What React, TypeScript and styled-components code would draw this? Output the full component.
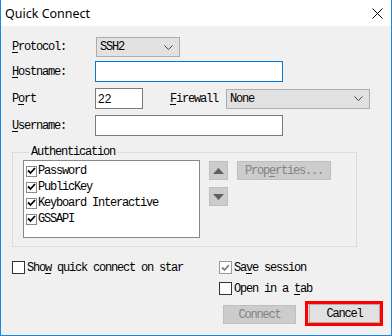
import React from 'react';
import styled, { createGlobalStyle } from 'styled-components';

const GlobalStyle = createGlobalStyle`
  html, body {
    margin: 0;
    padding: 0;
    background: #ffffff;
  }
`;

const mono = `"Liberation Mono", "DejaVu Sans Mono", monospace`;

const Window = styled.div`
  width: 392px;
  height: 336px;
  box-sizing: border-box;
  border: 1px solid #1a86dd;
  border-top: none;
  display: flex;
  flex-direction: column;
  background: #f0f0f0;
  font-family: ${mono};
  font-size: 12px;
  letter-spacing: -1.2px;
  color: #000;
  overflow: hidden;
`;

const TitleBar = styled.div`
  height: 26px;
  background: #fff;
  display: flex;
  align-items: center;
  justify-content: space-between;
  padding: 0 8px 0 4px;
  font-family: "Noto Sans", "Liberation Sans", sans-serif;
  font-size: 12.5px;
  letter-spacing: 0;
`;

const Body = styled.div`
  flex: 1;
  padding: 11px 0 0 11px;
  display: flex;
  flex-direction: column;
`;

const FormRow = styled.div<{ $h: number; $mt?: number }>`
  display: flex;
  align-items: center;
  height: ${(p) => p.$h}px;
  margin-top: ${(p) => p.$mt ?? 0}px;
`;

const Label = styled.span<{ $w?: number }>`
  width: ${(p) => p.$w ?? 84}px;
  flex-shrink: 0;
  white-space: pre;
`;

const U = styled.span`
  text-decoration: underline;
  text-underline-offset: 2px;
`;

const Select = styled.div<{ $w: number }>`
  width: ${(p) => p.$w}px;
  height: 20px;
  box-sizing: border-box;
  background: #e1e1e1;
  border: 1px solid #adadad;
  display: flex;
  align-items: center;
  justify-content: space-between;
  padding: 0 6px 0 3px;
`;

const Input = styled.div<{ $w: number; $focus?: boolean }>`
  width: ${(p) => p.$w}px;
  height: 21px;
  margin-left: -1px;
  box-sizing: border-box;
  background: #fff;
  border: 1px solid ${(p) => (p.$focus ? '#0078d7' : '#7a7a7a')};
  display: flex;
  align-items: center;
  padding-left: 2px;
  font-family: "Liberation Sans", Arial, sans-serif;
  font-size: 12px;
  letter-spacing: 0;
`;

const Group = styled.fieldset`
  margin: 10px 0 0 0;
  width: 345px;
  height: 101px;
  box-sizing: border-box;
  border: 1px solid #dcdcdc;
  padding: 2px 0 0 10px;
  display: flex;
  gap: 9px;
  align-items: flex-start;
  legend {
    padding: 0 2px;
    margin-left: 6px;
    line-height: 12px;
  }
`;

const ListBox = styled.div`
  width: 177px;
  height: 78px;
  box-sizing: border-box;
  background: #fff;
  border: 1px solid #828790;
  padding: 2px 0 0 2px;
  display: flex;
  flex-direction: column;
`;

const ListItem = styled.div`
  height: 16px;
  display: flex;
  align-items: center;
  gap: 1px;
`;

const SmallBox = styled.span`
  width: 11px;
  height: 11px;
  box-sizing: border-box;
  border: 1px solid #8a8a8a;
  background: #fff;
  display: inline-flex;
  align-items: center;
  justify-content: center;
`;

const SideCol = styled.div`
  display: flex;
  flex-direction: column;
  gap: 7px;
  padding-top: 1px;
`;

const Arrow = styled.div`
  width: 19px;
  height: 19px;
  box-sizing: border-box;
  background: #cccccc;
  border: 1px solid #bfbfbf;
  display: flex;
  align-items: center;
  justify-content: center;
`;

const Button = styled.div<{ $w: number; $disabled?: boolean }>`
  width: ${(p) => p.$w}px;
  height: 19px;
  box-sizing: border-box;
  background: ${(p) => (p.$disabled ? '#cccccc' : '#e1e1e1')};
  border: 1px solid ${(p) => (p.$disabled ? '#bfbfbf' : '#adadad')};
  color: ${(p) => (p.$disabled ? '#838383' : '#000')};
  display: flex;
  align-items: center;
  justify-content: center;
`;

const Highlight = styled.div`
  border: 3px solid #ff0000;
  padding: 0 0 0 1px;
  position: relative;
  top: -1px;
  box-shadow: 0 0 2px rgba(0, 0, 0, 0.3) inset;
`;

const Options = styled.div`
  display: flex;
  margin-top: 14px;
`;

const OptCol = styled.div<{ $w?: number }>`
  width: ${(p) => p.$w ?? 'auto'}px;
  display: flex;
  flex-direction: column;
  gap: 8px;
`;

const Check = styled.div`
  display: flex;
  align-items: center;
  gap: 2px;
  height: 13px;
`;

const Box = styled.span<{ $disabled?: boolean }>`
  width: 13px;
  height: 13px;
  box-sizing: border-box;
  border: 1px solid ${(p) => (p.$disabled ? '#9a9a9a' : '#333')};
  background: #fff;
  display: inline-flex;
  align-items: center;
  justify-content: center;
`;

const Footer = styled.div`
  display: flex;
  justify-content: flex-end;
  align-items: center;
  gap: 9px;
  margin-top: 7px;
  padding-right: 8px;
`;

const Chevron = () => (
  <svg width="9" height="5" viewBox="0 0 9 5">
    <path d="M0.5 0.5 L4.5 4.5 L8.5 0.5" fill="none" stroke="#444" strokeWidth="1" />
  </svg>
);

const Tick = ({ color = '#000' }: { color?: string }) => (
  <svg width="9" height="8" viewBox="0 0 9 8">
    <path d="M1 3.5 L3.5 6 L8 1" fill="none" stroke={color} strokeWidth="1.8" />
  </svg>
);

const authMethods = ['Password', 'PublicKey', 'Keyboard Interactive', 'GSSAPI'];

export default function App() {
  return (
    <>
      <GlobalStyle />
      <Window>
        <TitleBar>
          <span>Quick Connect</span>
          <svg width="11" height="11" viewBox="0 0 11 11">
            <path d="M0.5 0.5 L10.5 10.5 M10.5 0.5 L0.5 10.5" stroke="#000" strokeWidth="1" />
          </svg>
        </TitleBar>
        <Body>
          <FormRow $h={20}>
            <Label><U>P</U>rotocol:</Label>
            <Select $w={84}>
              <span>SSH2</span>
              <Chevron />
            </Select>
          </FormRow>
          <FormRow $h={21} $mt={4}>
            <Label><U>H</U>ostname:</Label>
            <Input $w={188} $focus />
          </FormRow>
          <FormRow $h={21} $mt={6}>
            <Label>P<U>o</U>rt</Label>
            <Input $w={48}>22</Input>
            <Label $w={56} style={{ marginLeft: 27 }}><U>F</U>irewall</Label>
            <Select $w={144}>
              <span>None</span>
              <Chevron />
            </Select>
          </FormRow>
          <FormRow $h={21} $mt={6}>
            <Label><U>U</U>sername:</Label>
            <Input $w={188} />
          </FormRow>
          <Group>
            <legend>Authentication</legend>
            <ListBox>
              {authMethods.map((m) => (
                <ListItem key={m}>
                  <SmallBox><Tick /></SmallBox>
                  <span>{m}</span>
                </ListItem>
              ))}
            </ListBox>
            <SideCol>
              <Arrow>
                <svg width="11" height="6" viewBox="0 0 11 6"><path d="M0 6 L5.5 0 L11 6 Z" fill="#606060" /></svg>
              </Arrow>
              <Arrow>
                <svg width="11" height="6" viewBox="0 0 11 6"><path d="M0 0 L5.5 6 L11 0 Z" fill="#606060" /></svg>
              </Arrow>
            </SideCol>
            <SideCol>
              <Button $w={94} $disabled>Prop<U>e</U>rties...</Button>
            </SideCol>
          </Group>
          <Options>
            <OptCol $w={207}>
              <Check>
                <Box />
                <span>Sho<U>w</U> quick connect on star</span>
              </Check>
            </OptCol>
            <OptCol>
              <Check>
                <Box $disabled><Tick color="#808080" /></Box>
                <span>Sa<U>v</U>e session</span>
              </Check>
              <Check>
                <Box />
                <span>Open in a <U>t</U>ab</span>
              </Check>
            </OptCol>
          </Options>
          <Footer>
            <Button $w={73} $disabled>Connect</Button>
            <Highlight>
              <Button $w={71}>Cancel</Button>
            </Highlight>
          </Footer>
        </Body>
      </Window>
    </>
  );
}
